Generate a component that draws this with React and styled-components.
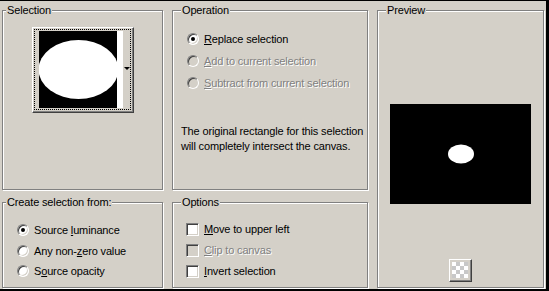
import React from 'react';
import styled, { createGlobalStyle } from 'styled-components';

const GlobalStyle = createGlobalStyle`
  html, body {
    margin: 0;
    padding: 0;
    background: #d4d0c8;
  }
`;

const Window = styled.div`
  box-sizing: border-box;
  width: 549px;
  height: 291px;
  background: #d4d0c8;
  border-top: 1px solid #000;
  border-right: 3px solid #000;
  border-bottom: 2px solid #000;
  padding: 9px 0 0 2px;
  display: grid;
  grid-template-columns: 161px 196px 167px;
  grid-template-rows: 180px 86px;
  column-gap: 9px;
  row-gap: 12px;
  font-family: 'Liberation Sans', Arial, sans-serif;
  font-size: 11px;
  letter-spacing: -0.15px;
  color: #000;
`;

const Group = styled.div`
  position: relative;
  box-sizing: border-box;
  border: 1px solid #808080;
  box-shadow: 1px 1px 0 #fff, inset 1px 1px 0 #fff;
  grid-column: ${(p) => p.$col};
  grid-row: ${(p) => p.$row};
  display: flex;
  flex-direction: column;
`;

const Legend = styled.span`
  position: absolute;
  top: -7px;
  left: ${(p) => p.$left}px;
  padding: 0 1px;
  line-height: 13px;
  background: #d4d0c8;
  white-space: nowrap;
`;

const Centered = styled.div`
  display: flex;
  justify-content: center;
  padding-top: 16px;
`;

const PickerButton = styled.div`
  box-sizing: border-box;
  width: 102px;
  height: 86px;
  padding: 1px 2px 2px 1px;
  border: 1px solid;
  border-color: #fff #404040 #404040 #fff;
  box-shadow: inset -1px -1px 0 #808080;
  background: #d4d0c8;
`;

const Focus = styled.div`
  box-sizing: border-box;
  width: 97px;
  height: 81px;
  border: 1px dotted #000;
  padding: 1px 0 1px 4px;
  display: flex;
`;

const WhiteStrip = styled.div`
  width: 6px;
  background: #fff;
`;

const ArrowArea = styled.div`
  flex: 1;
  display: flex;
  align-items: center;
  justify-content: center;
  padding-bottom: 2px;
`;

const Arrow = styled.div`
  width: 0;
  height: 0;
  border-left: 3px solid transparent;
  border-right: 3px solid transparent;
  border-top: 3px solid #000;
  margin-left: 1px;
`;

const OptionList = styled.div`
  display: flex;
  flex-direction: column;
  padding: ${(p) => p.$top}px 0 0 ${(p) => p.$left}px;
`;

const Row = styled.div`
  display: flex;
  align-items: center;
  gap: 5px;
  height: ${(p) => p.$h}px;
  white-space: nowrap;
  color: ${(p) => (p.$disabled ? '#808080' : '#000')};
  text-shadow: ${(p) => (p.$disabled ? '1px 1px 0 #fff' : 'none')};
`;

const Radio = styled.span`
  box-sizing: border-box;
  flex: none;
  width: 12px;
  height: 12px;
  border-radius: 50%;
  border: 1px solid;
  border-color: #808080 #fff #fff #808080;
  box-shadow: inset 1px 1px 0 #404040, inset -1px -1px 0 #d4d0c8;
  background: ${(p) => (p.$disabled ? '#d4d0c8' : '#fff')};
  display: flex;
  align-items: center;
  justify-content: center;
  &::after {
    content: '';
    width: 4px;
    height: 4px;
    border-radius: 50%;
    background: ${(p) => (p.$checked ? '#000' : 'transparent')};
  }
`;

const Check = styled.span`
  box-sizing: border-box;
  flex: none;
  width: 13px;
  height: 13px;
  border: 1px solid;
  border-color: #808080 #fff #fff #808080;
  box-shadow: inset 1px 1px 0 #404040, inset -1px -1px 0 #d4d0c8;
  background: ${(p) => (p.$disabled ? '#d4d0c8' : '#fff')};
`;

const Key = styled.span`
  text-decoration: underline;
`;

const Note = styled.p`
  margin: 30px 0 0 8px;
  line-height: 15px;
  white-space: nowrap;
`;

const PreviewBody = styled.div`
  flex: 1;
  display: flex;
  flex-direction: column;
  align-items: center;
  padding: 93px 0 5px;
`;

const Spacer = styled.div`
  flex: 1;
`;

const CheckerButton = styled.div`
  box-sizing: border-box;
  width: 23px;
  height: 23px;
  border: 1px solid;
  border-color: #fff #404040 #404040 #fff;
  box-shadow: inset -1px -1px 0 #808080;
  display: flex;
  align-items: center;
  justify-content: center;
  padding: 0 1px 1px 0;
  &::after {
    content: '';
    width: 16px;
    height: 16px;
    background: repeating-conic-gradient(#c8c8c8 0 25%, #fff 0 50%) 0 0 / 8px 8px;
  }
`;

const SourceImage = () => (
  <svg width="79" height="77" style={{ display: 'block' }}>
    <defs>
      <filter id="soft" x="-10%" y="-10%" width="120%" height="120%">
        <feGaussianBlur stdDeviation="0.5" />
      </filter>
    </defs>
    <rect width="79" height="77" fill="#000" />
    <ellipse cx="39.5" cy="38.5" rx="40" ry="29.5" fill="#fff" filter="url(#soft)" />
  </svg>
);

const PreviewImage = () => (
  <svg width="141" height="100" style={{ display: 'block' }}>
    <rect width="141" height="100" fill="#000" />
    <ellipse cx="71" cy="50" rx="13" ry="9.5" fill="#fff" />
  </svg>
);

const RadioRow = ({ h, checked, disabled, children }) => (
  <Row $h={h} $disabled={disabled}>
    <Radio $checked={checked} $disabled={disabled} />
    <span>{children}</span>
  </Row>
);

const CheckRow = ({ h, disabled, children }) => (
  <Row $h={h} $disabled={disabled}>
    <Check $disabled={disabled} />
    <span>{children}</span>
  </Row>
);

export default function App() {
  return (
    <>
      <GlobalStyle />
      <Window>
        <Group $col="1" $row="1">
          <Legend $left={3}>Selection</Legend>
          <Centered>
            <PickerButton>
              <Focus>
                <SourceImage />
                <WhiteStrip />
                <ArrowArea>
                  <Arrow />
                </ArrowArea>
              </Focus>
            </PickerButton>
          </Centered>
        </Group>

        <Group $col="2" $row="1">
          <Legend $left={8}>Operation</Legend>
          <OptionList $top={17} $left={14}>
            <RadioRow h={22} checked>
              <Key>R</Key>eplace selection
            </RadioRow>
            <RadioRow h={22} disabled>
              <Key>A</Key>dd to current selection
            </RadioRow>
            <RadioRow h={22} disabled>
              <Key>S</Key>ubtract from current selection
            </RadioRow>
          </OptionList>
          <Note>
            The original rectangle for this selection
            <br />
            will completely intersect the canvas.
          </Note>
        </Group>

        <Group $col="3" $row="1 / span 2">
          <Legend $left={8}>Preview</Legend>
          <PreviewBody>
            <PreviewImage />
            <Spacer />
            <CheckerButton />
          </PreviewBody>
        </Group>

        <Group $col="1" $row="2">
          <Legend $left={3}>Create selection from:</Legend>
          <OptionList $top={17} $left={14}>
            <RadioRow h={20.5} checked>
              Source <Key>l</Key>uminance
            </RadioRow>
            <RadioRow h={20.5}>
              Any non-<Key>z</Key>ero value
            </RadioRow>
            <RadioRow h={20.5}>
              S<Key>o</Key>urce opacity
            </RadioRow>
          </OptionList>
        </Group>

        <Group $col="2" $row="2">
          <Legend $left={8}>Options</Legend>
          <OptionList $top={15.5} $left={13}>
            <CheckRow h={21}>
              <Key>M</Key>ove to upper left
            </CheckRow>
            <CheckRow h={21} disabled>
              <Key>C</Key>lip to canvas
            </CheckRow>
            <CheckRow h={21}>
              <Key>I</Key>nvert selection
            </CheckRow>
          </OptionList>
        </Group>
      </Window>
    </>
  );
}
